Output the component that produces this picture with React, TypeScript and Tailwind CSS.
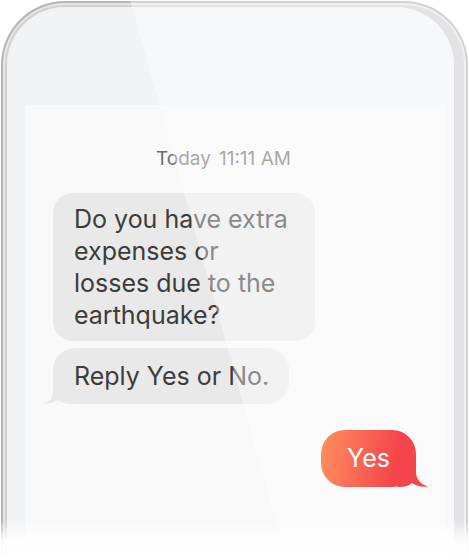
import React from "react";

const font = { fontFamily: "Inter, 'Noto Sans', sans-serif" };

function LeftTail({ color }: { color: string }) {
  return (
    <svg className="absolute -left-[10px] bottom-0 w-[30px] h-[24px]" viewBox="0 0 30 24">
      <path d="M10 0 L10 12 C10 18 6 22 0 23.5 C6 24 11 22.5 15 20 C18 22.5 22 24 28 24 L30 24 L30 0 Z" fill={color} />
    </svg>
  );
}

function RightTail({ color }: { color: string }) {
  return (
    <svg className="absolute -right-[12px] bottom-0 w-[30px] h-[26px]" viewBox="0 0 30 26">
      <path d="M18 0 L18 11 C18 18 23 23.5 30 25.5 C24 26.5 18 25 14 22 C11 24.5 7 26 2 26 L0 26 L0 0 Z" fill={color} />
    </svg>
  );
}

export default function App() {
  return (
    <div className="relative w-[469px] h-[560px] overflow-hidden bg-white pt-[1px] px-[1px]" style={font}>
      {/* phone frame rings */}
      <div className="h-[620px] rounded-t-[64px] bg-[#b5b5b8] p-[2px]">
        <div className="h-full rounded-t-[62px] bg-[#e6e6e8] p-[2px]">
          <div className="h-full rounded-t-[60px] bg-[#d1d1d4] pl-[2px] pt-[2px] pr-[10px]">
            <div className="h-full rounded-t-[58px] bg-[#f2f3f5] pl-[18px] pr-[8px] pt-[98px]">
              {/* screen */}
              <div className="h-full bg-[#f9f9f9] px-[28px]">
                <div className="pt-[42px] pr-[24px] text-center text-[19px] leading-[24px] text-[#6e6e70]">
                  <span>Today</span>
                  <span className="ml-[8px]">11:11 AM</span>
                </div>

                <div className="mt-[22px] flex flex-col items-start gap-[7px]">
                  <div className="w-[262px] rounded-[20px] bg-[#e9e9e9] pl-[21px] pr-[20px] py-[10px] text-[25px] leading-[32px] text-[#3c3c3c]">
                    Do you have extra expenses or losses due to the earthquake?
                  </div>
                  <div className="relative rounded-[22px] bg-[#e9e9e9] pl-[21px] pr-[20px] py-[12px] text-[25px] leading-[32px] text-[#3c3c3c]">
                    <LeftTail color="#e9e9e9" />
                    <span className="relative">Reply Yes or No.</span>
                  </div>
                </div>

                <div className="mt-[26px] flex justify-end pr-[2px]">
                  <div className="relative z-10 flex h-[57px] w-[95px] items-center justify-center rounded-[24px] bg-[linear-gradient(100deg,#ff905f_0%,#f5474b_75%)] text-[25px] text-white">
                    <RightTail color="#f5474b" />
                    <span className="relative">Yes</span>
                  </div>
                </div>
              </div>
            </div>
          </div>
        </div>
      </div>

      {/* glass glare */}
      <div
        className="pointer-events-none absolute inset-0 z-[5] bg-white/40"
        style={{ clipPath: "polygon(130px 0, 469px 0, 469px 560px, 287px 560px)" }}
      />

      {/* bottom fade */}
      <div className="pointer-events-none absolute bottom-0 left-0 right-0 z-20 h-[40px] bg-gradient-to-b from-white/0 via-white/90 to-white" />
    </div>
  );
}
